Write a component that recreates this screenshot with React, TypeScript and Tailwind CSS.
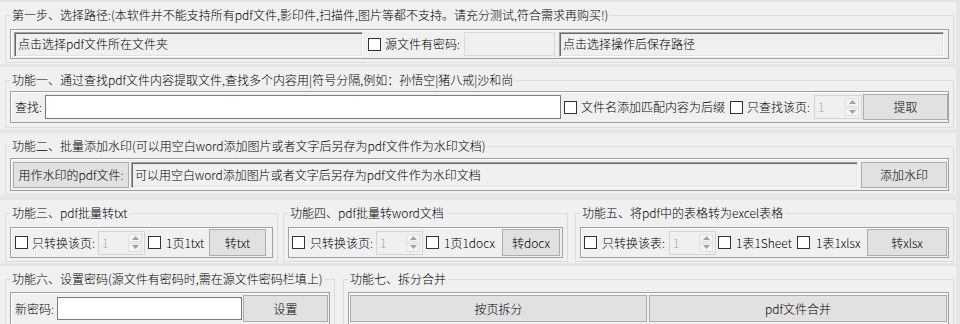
const font = "font-['Microsoft_YaHei','Noto_Sans_CJK_SC',sans-serif] font-light";

function Check() {
  return <span className="block h-[13px] w-[13px] shrink-0 border border-[#333333] bg-white" />;
}

function Spin({ w = 47 }: { w?: number }) {
  return (
    <div
      className="flex h-[24px] shrink-0 items-center justify-between border border-[#d5d5d5] bg-[#f0f0f0] pl-[3px]"
      style={{ width: w }}
    >
      <span className="text-[#a8a8a8]">1</span>
      <div className="mr-[2px] flex h-[18px] w-[14px] flex-col gap-[1px]">
        <span className="flex flex-1 items-center justify-center border border-[#e0e0e0] bg-[#f4f4f4]">
          <svg width="7" height="4" viewBox="0 0 7 4">
            <path d="M0 4 L3.5 0 L7 4 Z" fill="#a0a0a0" />
          </svg>
        </span>
        <span className="flex flex-1 items-center justify-center border border-[#e0e0e0] bg-[#f4f4f4]">
          <svg width="7" height="4" viewBox="0 0 7 4">
            <path d="M0 0 L3.5 4 L7 0 Z" fill="#a0a0a0" />
          </svg>
        </span>
      </div>
    </div>
  );
}

function Btn({ children, className = "" }: { children: React.ReactNode; className?: string }) {
  return (
    <div
      className={`flex shrink-0 items-center justify-center border border-[#adadad] bg-[#e1e1e1] text-black ${className}`}
    >
      {children}
    </div>
  );
}

const sunken =
  "flex items-center border border-t-[#a0a0a0] border-l-[#a0a0a0] border-b-white border-r-white bg-[#f0f0f0] pl-[3px] shadow-[inset_1px_1px_0_#696969,inset_-1px_-1px_0_#e3e3e3]";

function Group({
  title,
  className = "",
  gap = 6,
  children,
}: {
  title: string;
  className?: string;
  gap?: number;
  children: React.ReactNode;
}) {
  return (
    <fieldset className={`mt-[5px] shrink-0 border border-[#dcdcdc] px-[4px] ${className}`}>
      <legend className="px-[2px] leading-[16px]">{title}</legend>
      <div style={{ marginTop: gap }}>{children}</div>
    </fieldset>
  );
}

const panel =
  "flex items-center border border-[#a0a0a0] shadow-[inset_1px_1px_0_#ffffff]";

export default function App() {
  return (
    <div
      className={`h-[324px] w-[960px] overflow-hidden bg-[#e5e5e5] pt-[2px] text-[12px] leading-[16px] text-black ${font}`}
    >
      {/* 第一步 */}
      <div className="flex w-[956px] bg-[#f0f0f0] pb-[1px] pl-[5px]">
        <Group title="第一步、选择路径:(本软件并不能支持所有pdf文件,影印件,扫描件,图片等都不支持。请充分测试,符合需求再购买!)" className="w-[949px] pb-[3px]" gap={6}>
          <div className={`${panel} h-[30px]`}>
            <div className={`${sunken} ml-[3px] h-[25px] w-[349px]`}>点击选择pdf文件所在文件夹</div>
            <span className="ml-[5px]"><Check /></span>
            <span className="ml-[4px] w-[79px]">源文件有密码:</span>
            <div className="h-[24px] w-[91px] border border-[#d9d9d9] bg-[#f0f0f0]" />
            <div className={`${sunken} ml-[4px] mr-[4px] h-[25px] flex-1`}>点击选择操作后保存路径</div>
          </div>
        </Group>
      </div>

      {/* 功能一 */}
      <div className="mt-[3px] flex w-[956px] bg-[#f0f0f0] pb-[1px] pl-[5px]">
        <Group title="功能一、通过查找pdf文件内容提取文件,查找多个内容用|符号分隔,例如：孙悟空|猪八戒|沙和尚" className="w-[949px] pb-[4px]" gap={3}>
          <div className={`${panel} h-[32px]`}>
            <span className="ml-[4px] w-[30px]">查找:</span>
            <div className="h-[24px] w-[516px] border border-[#7a7a7a] bg-white" />
            <span className="ml-[3px]"><Check /></span>
            <span className="ml-[4px] w-[149px]">文件名添加匹配内容为后缀</span>
            <Check />
            <span className="ml-[4px] w-[67px]">只查找该页:</span>
            <Spin w={48} />
            <Btn className="ml-[1px] h-[26px] w-[85px]">提取</Btn>
          </div>
        </Group>
      </div>

      {/* 功能二 */}
      <div className="mt-[4px] flex w-[956px] bg-[#f0f0f0] pb-[1px] pl-[5px]">
        <Group title="功能二、批量添加水印(可以用空白word添加图片或者文字后另存为pdf文件作为水印文档)" className="w-[949px] pb-[3px]" gap={4}>
          <div className={`${panel} h-[33px]`}>
            <Btn className="ml-[2px] h-[26px] w-[116px]">用作水印的pdf文件:</Btn>
            <div className={`${sunken} ml-[2px] h-[26px] w-[727px]`}>可以用空白word添加图片或者文字后另存为pdf文件作为水印文档</div>
            <Btn className="ml-[3px] h-[26px] w-[86px]">添加水印</Btn>
          </div>
        </Group>
      </div>

      {/* 功能三 四 五 */}
      <div className="mt-[4px] flex w-[956px] bg-[#f0f0f0] pb-[1px] pl-[5px]">
        <Group title="功能三、pdf批量转txt" className="w-[273px] pb-[3px]" gap={6}>
          <div className={`${panel} h-[31px]`}>
            <span className="ml-[4px]"><Check /></span>
            <span className="ml-[4px] w-[66px]">只转换该页:</span>
            <Spin />
            <span className="ml-[3px]"><Check /></span>
            <span className="ml-[5px] w-[43px]">1页1txt</span>
            <Btn className="h-[27px] w-[57px]">转txt</Btn>
          </div>
        </Group>
        <Group title="功能四、pdf批量转word文档" className="ml-[5px] w-[285px] pb-[3px]" gap={6}>
          <div className={`${panel} h-[31px]`}>
            <span className="ml-[3px]"><Check /></span>
            <span className="ml-[5px] w-[66px]">只转换该页:</span>
            <Spin />
            <span className="ml-[3px]"><Check /></span>
            <span className="ml-[5px] w-[58px]">1页1docx</span>
            <Btn className="h-[27px] w-[58px]">转docx</Btn>
          </div>
        </Group>
        <Group title="功能五、将pdf中的表格转为excel表格" className="ml-[7px] w-[379px] pb-[3px]" gap={6}>
          <div className={`${panel} h-[31px]`}>
            <span className="ml-[3px]"><Check /></span>
            <span className="ml-[5px] w-[67px]">只转换该表:</span>
            <Spin />
            <span className="ml-[2px]"><Check /></span>
            <span className="ml-[5px] w-[61px]">1表1Sheet</span>
            <Check />
            <span className="ml-[6px] w-[51px]">1表1xlsx</span>
            <Btn className="h-[27px] w-[80px]">转xlsx</Btn>
          </div>
        </Group>
      </div>

      {/* 功能六 七 */}
      <div className="mt-[3px] flex w-[956px] bg-[#f0f0f0] pb-[1px] pl-[5px]">
        <Group title="功能六、设置密码(源文件有密码时,需在源文件密码栏填上)" className="w-[330px] pb-[3px]" gap={5}>
          <div className={`${panel} h-[33px]`}>
            <span className="ml-[4px] w-[42px]">新密码:</span>
            <div className="h-[23px] w-[185px] border border-[#7a7a7a] bg-white" />
            <Btn className="ml-[1px] h-[27px] w-[85px]">设置</Btn>
          </div>
        </Group>
        <Group title="功能七、拆分合并" className="ml-[8px] w-[611px] pb-[3px]" gap={5}>
          <div className={`${panel} h-[33px]`}>
            <Btn className="ml-[1px] h-[27px] w-[297px]">按页拆分</Btn>
            <Btn className="ml-[2px] h-[27px] w-[298px]">pdf文件合并</Btn>
          </div>
        </Group>
      </div>
    </div>
  );
}
